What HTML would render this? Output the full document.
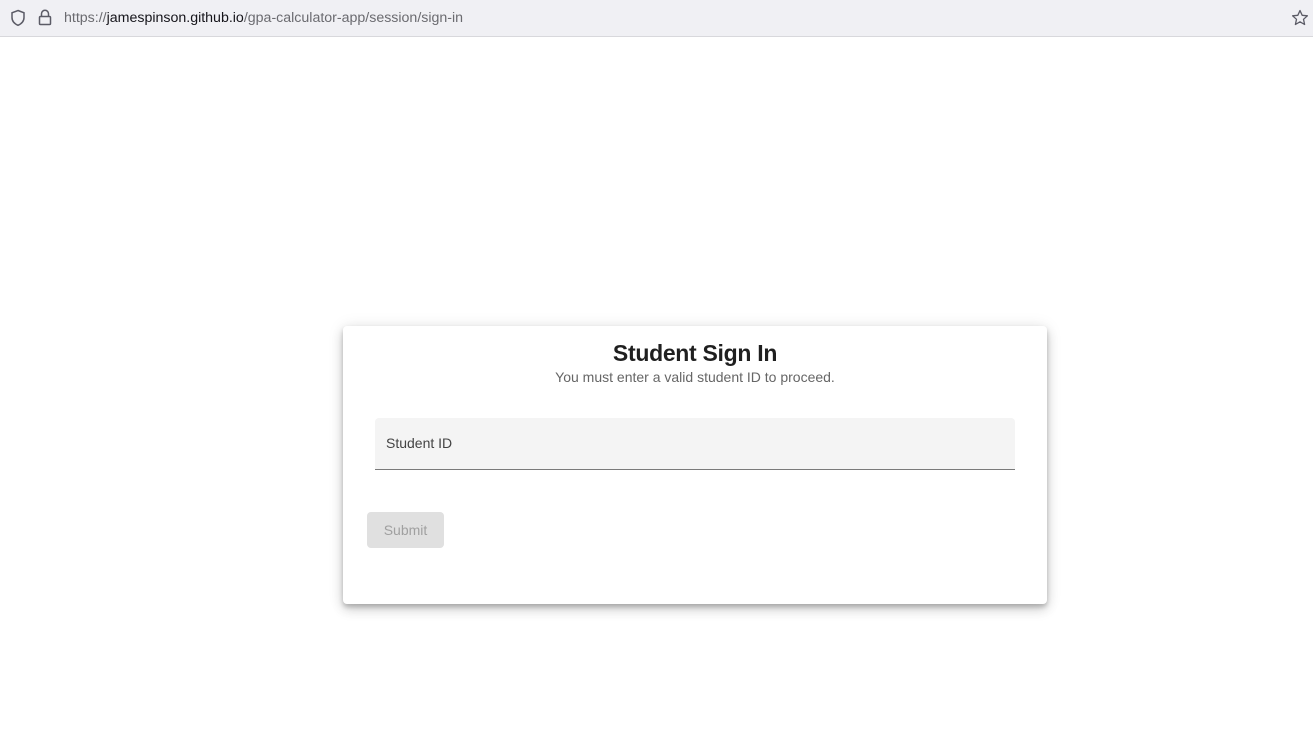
<!DOCTYPE html>
<html><head><meta charset="utf-8"><style>
*{margin:0;padding:0;box-sizing:border-box}
html,body{width:1313px;height:741px;background:#fff;overflow:hidden;font-family:"Liberation Sans",sans-serif}
.bar{position:absolute;left:0;top:0;width:1313px;height:37px;background:#f0f0f4;border-bottom:1px solid #d8d8dc}
.url{position:absolute;left:64px;top:10px;font-size:14.2px;color:#6b6b70;letter-spacing:0px}
.url b{font-weight:normal;color:#15141a}
.card{position:absolute;left:343px;top:326px;width:704px;height:278px;background:#fff;border-radius:4px;box-shadow:0 3px 5px rgba(0,0,0,.2),0 6px 12px rgba(0,0,0,.14),0 1px 16px rgba(0,0,0,.1)}
h1{position:absolute;left:0;width:704px;top:14px;text-align:center;font-size:23px;font-weight:bold;color:#1f1f1f;letter-spacing:-0.3px}
.sub{position:absolute;left:0;width:704px;top:43px;text-align:center;font-size:14px;color:#666}
.field{position:absolute;left:32px;top:92px;width:640px;height:52px;background:#f4f4f4;border-radius:4px 4px 0 0;border-bottom:1px solid #7a7a7a}
.field span{position:absolute;left:11px;top:17px;font-size:14px;color:#444}
.btn{position:absolute;left:24px;top:186px;width:77px;height:36px;background:#e0e0e0;border-radius:4px;color:#a0a0a0;font-size:14px;text-align:center;line-height:36px}
</style></head><body>
<div class="bar">
<svg style="position:absolute;left:10px;top:9px" width="16" height="18" viewBox="0 0 16 18"><path d="M8 1.5 L14 3.8 V8.5 C14 12.5 11 15 8 16.3 C5 15 2 12.5 2 8.5 V3.8 Z" fill="none" stroke="#5b5b66" stroke-width="1.5"/></svg>
<svg style="position:absolute;left:38px;top:9px" width="14" height="17" viewBox="0 0 14 17"><path d="M3.5 7 V4.8 A3.5 3.5 0 0 1 10.5 4.8 V7" fill="none" stroke="#5b5b66" stroke-width="1.5"/><rect x="1.5" y="7.5" width="11" height="8" rx="1" fill="none" stroke="#5b5b66" stroke-width="1.5"/></svg>
<div class="url">https://<b>jamespinson.github.io</b>/gpa-calculator-app/session/sign-in</div>
<svg style="position:absolute;left:1291px;top:9px" width="18" height="18" viewBox="0 0 18 18"><path d="M9 1.5 L11.2 6.3 L16.4 6.8 L12.5 10.3 L13.6 15.5 L9 12.8 L4.4 15.5 L5.5 10.3 L1.6 6.8 L6.8 6.3 Z" fill="none" stroke="#5b5b66" stroke-width="1.3" stroke-linejoin="round"/></svg>
</div>
<div class="card">
<h1>Student Sign In</h1>
<div class="sub">You must enter a valid student ID to proceed.</div>
<div class="field"><span>Student ID</span></div>
<div class="btn">Submit</div>
</div>
</body></html>
